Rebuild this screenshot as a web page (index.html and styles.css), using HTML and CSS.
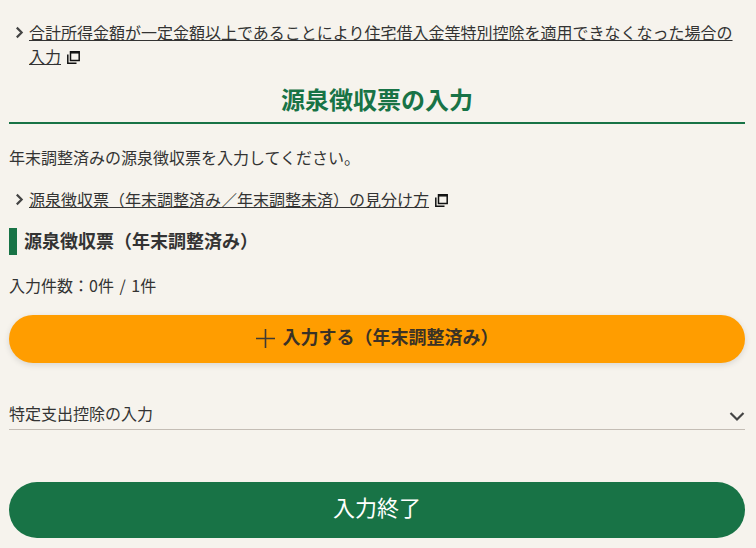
FILE: index.html
```html
<!DOCTYPE html>
<html lang="ja">
<head>
<meta charset="utf-8">
<title>源泉徴収票の入力</title>
<link rel="stylesheet" href="styles.css">
</head>
<body>
<main class="page">
  <div class="link-row first">
    <svg class="chev" viewBox="0 0 8 12"><path d="M1.5 1.5 6 6l-4.500 4.500"/></svg>
    <p class="link-text"><a href="#">合計所得金額が一定金額以上であることにより住宅借入金等特別控除を適用できなくなった場合の入力</a><svg class="ext" viewBox="0 0 13 13"><path class="ext-front" d="M3.500.8h8.700v8.700H3.500z"/><path class="ext-bar" d="M3.500 1.800h8.700"/><path class="ext-back" d="M.8 3.500v8.700h8.700"/></svg></p>
  </div>
  <h1 class="title">源泉徴収票の入力</h1>
  <p class="lead">年末調整済みの源泉徴収票を入力してください。</p>
  <div class="link-row second">
    <svg class="chev" viewBox="0 0 8 12"><path d="M1.5 1.5 6 6l-4.500 4.500"/></svg>
    <p class="link-text"><a href="#">源泉徴収票（年末調整済み／年末調整未済）の見分け方</a><svg class="ext" viewBox="0 0 13 13"><path class="ext-front" d="M3.500.8h8.700v8.700H3.500z"/><path class="ext-bar" d="M3.500 1.800h8.700"/><path class="ext-back" d="M.8 3.500v8.700h8.700"/></svg></p>
  </div>
  <h2 class="section">源泉徴収票（年末調整済み）</h2>
  <p class="count">入力件数：0件 / 1件</p>
  <button class="btn-add" type="button">
    <svg class="plus" viewBox="0 0 19 19"><path d="M9.500 0v19M0 9.500h19"/></svg>
    <span class="btn-label">入力する（年末調整済み）</span>
  </button>
  <div class="accordion">
    <span>特定支出控除の入力</span>
    <svg class="down" viewBox="0 0 16 11"><path d="M1.500 2 8 8.500 14.500 2"/></svg>
  </div>
  <button class="btn-end" type="button">入力終了</button>
</main>
</body>
</html>
```
FILE: styles.css
```css
* { box-sizing: border-box; }
html, body { margin: 0; height: 548px; overflow: hidden; }
body {
  background: #f6f3ed;
  color: #333;
  font-family: "Noto Sans CJK JP", "Noto Sans", sans-serif;
  font-size: 16px;
}
.page { width: 736px; margin-left: 9px; padding-top: 20px; display: flex; flex-direction: column; }
p, h1, h2 { margin: 0; }
.link-row { display: flex; align-items: flex-start; padding-left: 6px; }
.chev { width: 9px; height: 13px; margin: 6px 5px 0 0; flex: none; fill: none; stroke: #444; stroke-width: 2; }
.link-text { line-height: 24px; flex: 1; }
.link-text a { color: #333; text-decoration: underline; text-underline-offset: 1px; text-decoration-thickness: 1px; }
.ext { width: 13px; height: 13px; margin-left: 6px; vertical-align: -1px; fill: none; stroke: #111; stroke-width: 1.5; }
.title {
  margin-top: 10px; height: 46px; line-height: 42px; text-align: center;
  color: #187346; font-size: 24px; font-weight: 700;
  border-bottom: 2px solid #187346;
}
.lead { margin-top: 21px; line-height: 24px; }
.second { margin-top: 18px; }
.section {
  margin-top: 17px; height: 27px; line-height: 24px;
  padding-left: 7px; border-left: 8px solid #187346;
  font-size: 18px; font-weight: 700;
}
.count { margin-top: 18px; line-height: 24px; word-spacing: 2px; }
.btn-add {
  margin-top: 18px; height: 48px; border: 0; border-radius: 24px; padding: 0 0 2px;
  background: #ff9d00; color: #3a3226;
  font: 700 18px "Noto Sans CJK JP", sans-serif;
  display: flex; align-items: center; justify-content: center; gap: 8px;
  box-shadow: 0 2px 6px rgba(0,0,0,.12);
}
.btn-label { padding-bottom: 4px; }
.plus { width: 19px; height: 19px; fill: none; stroke: #3f3a33; stroke-width: 1.6; }
.accordion {
  margin-top: 38px; height: 29px; display: flex; justify-content: space-between; align-items: center;
  border-bottom: 1px solid #c4bdb5; padding-bottom: 4px;
}
.down { width: 16px; height: 11px; fill: none; stroke: #444; stroke-width: 2.2; margin-top: 7px; }
.btn-end {
  margin-top: 52px; height: 56px; border: 0; border-radius: 28px; padding: 0 0 9px;
  background: #187346; color: #fff;
  font: 400 22px "Noto Sans CJK JP", sans-serif;
}
```
